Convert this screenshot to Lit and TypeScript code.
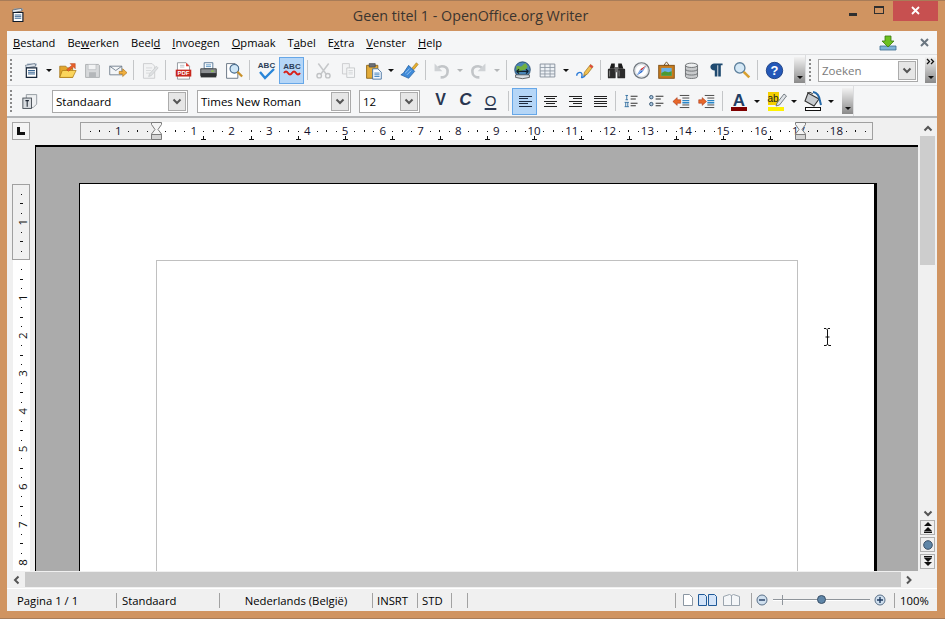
import { LitElement, html, css, svg, TemplateResult } from 'lit';
import { customElement } from 'lit/decorators.js';

const NAVY = '#1f3a5f';

const ic = (body: unknown, size = 19) =>
  html`<svg width=${size} height=${size} viewBox="0 0 22 22">${body}</svg>`;

// paragraph alignment icons are crisp 1px lines, so they get their own pixel grid
const al = (rows: number[][], color = '#222') =>
  html`<svg width="18" height="18" viewBox="0 0 18 18">${rows.map(
    ([x, y, w]) => svg`<rect x=${x} y=${y} width=${w} height="1" fill=${color}/>`
  )}</svg>`;

const ICONS: Record<string, TemplateResult> = {
  new: ic(svg`
    <path d="M6 3h11v2H6z" fill="#8fa3b8"/><path d="M4 5l11-2 1 3-11 2z" fill="#dfe6ee" stroke="#4a5a6c" stroke-width=".7"/>
    <path d="M5 8h12v11H5z" fill="#fff" stroke="#16263a" stroke-width="1.4"/>
    <path d="M7 11h8M7 13h8M7 15h8" stroke="#2c5c8c" stroke-width="1.1"/>`),
  open: ic(svg`
    <path d="M2 6h7l2 2h6v11H2z" fill="#e3a62b" stroke="#9a6a10" stroke-width=".8"/>
    <path d="M2 19l3-8h16l-4 8z" fill="#fbd55c" stroke="#a87512" stroke-width=".8"/>
    <path d="M10 10l6-5-2-2h6v6l-2-2-6 5z" fill="#e8602a" stroke="#a83a10" stroke-width=".5"/>`),
  save: ic(svg`
    <path d="M3 4h15l1 1v14H3z" fill="#d7d9db" stroke="#a8abae"/>
    <path d="M6 4h9v6H6z" fill="#f2f3f4" stroke="#b4b7ba" stroke-width=".7"/>
    <path d="M7 13h8v6H7z" fill="#b4b7ba"/>`),
  mail: ic(svg`
    <path d="M2 6h14v10H2z" fill="#f4f6f8" stroke="#6c7a88"/>
    <path d="M2 6l7 5 7-5" fill="none" stroke="#6c7a88"/>
    <path d="M13 12h4V9l5 4.500-5 4.500v-3h-4z" fill="#f0b040" stroke="#a86a10" stroke-width=".7"/>`),
  edit: ic(svg`
    <path d="M4 3h10l3 3v14H4z" fill="#f2f3f4" stroke="#c8cacc"/>
    <path d="M7 8h7M7 11h6M7 14h5" stroke="#d4d6d8"/>
    <path d="M11 15l8-9 2 2-8 9-3 1z" fill="#dfe1e3" stroke="#c2c4c6" stroke-width=".7"/>`),
  pdf: ic(svg`
    <path d="M4 2h10l4 4v15H4z" fill="#fff" stroke="#8a8f96"/>
    <path d="M14 2v4h4z" fill="#e03a30"/>
    <path d="M7 5h5M7 7h5" stroke="#b8bcc2"/>
    <rect x="2" y="10" width="18" height="8" fill="#c8281e"/>
    <text x="11" y="16.500" font-family="Liberation Sans" font-size="7" font-weight="700" fill="#fff" text-anchor="middle">PDF</text>`),
  print: ic(svg`
    <path d="M6 2h10v7H6z" fill="#fff" stroke="#4a6c8c"/>
    <path d="M8 4.500h6M8 6.500h6" stroke="#4a8cc0"/>
    <path d="M2 9h18v8H2z" fill="#8d9093" stroke="#3a3c3e"/>
    <path d="M2 14h18v5H2z" fill="#2f3133"/>
    <rect x="14" y="11" width="3" height="1.500" fill="#8fd040"/>`),
  preview: ic(svg`
    <path d="M3 3h10l3 3v14H3z" fill="#fff" stroke="#5a6878"/>
    <circle cx="12" cy="9" r="5" fill="#cfe6f6" stroke="#44698c" stroke-width="1.300"/>
    <path d="M15.500 12.500L21 18" stroke="#c8902a" stroke-width="2.600"/>`),
  abc: ic(svg`
    <text x="10.500" y="9" font-family="Liberation Sans" font-size="8" font-weight="700" fill="#2c3e58" text-anchor="middle">ABC</text>
    <path d="M4 13l5 6 9-9" fill="none" stroke="#2a86d8" stroke-width="2.400"/>`, 22),
  abcred: ic(svg`
    <text x="11" y="10" font-family="Liberation Sans" font-size="8" font-weight="700" fill="#2c3e58" text-anchor="middle">ABC</text>
    <path d="M3 14q2-3 4 0t4 0 4 0 4 0" fill="none" stroke="#d8201a" stroke-width="2"/>`, 22),
  cut: ic(svg`
    <path d="M5 3l9 12M17 3L8 15" stroke="#c6c8ca" stroke-width="1.800"/>
    <circle cx="6" cy="17" r="2.600" fill="none" stroke="#c0c2c4" stroke-width="1.600"/>
    <circle cx="16" cy="17" r="2.600" fill="none" stroke="#c0c2c4" stroke-width="1.600"/>`),
  copy: ic(svg`
    <path d="M4 3h8v12H4z" fill="#f2f3f4" stroke="#c8cacc"/>
    <path d="M9 8h9v11H9z" fill="#f6f7f8" stroke="#c4c6c8"/>
    <path d="M11 11h5M11 13h5M11 15h5" stroke="#d2d4d6"/>`),
  paste: ic(svg`
    <path d="M3 5h13v15H3z" fill="#e3ac3a" stroke="#8a6214"/>
    <path d="M6 3h7v4H6z" fill="#6c7178" stroke="#3a3e44" stroke-width=".7"/>
    <path d="M10 9h6l4 4v8H10z" fill="#f7fbff" stroke="#3c6c9c"/>
    <path d="M12 14h6M12 16h6M12 18h6" stroke="#2f78b8"/>`),
  brush: ic(svg`
    <path d="M14 8l5-6 2 2-5 6z" fill="#e8b030" stroke="#8a6410" stroke-width=".6"/>
    <path d="M10 5l7 7-7 8-9-4 3-2z" fill="#3f8ad8" stroke="#1f5a9c" stroke-width=".8"/>
    <path d="M6 14l5-5M8 16l5-5" stroke="#a8d0f4"/>`),
  undo: ic(svg`
    <path d="M6 9c4-5 13-3 12 4 0 4-4 6-8 6" fill="none" stroke="#c2c5c8" stroke-width="3"/>
    <path d="M3 3v9h9z" fill="#cfd2d5"/>`),
  redo: ic(svg`
    <path d="M16 9C12 4 3 6 4 13c0 4 4 6 8 6" fill="none" stroke="#c2c5c8" stroke-width="3"/>
    <path d="M19 3v9h-9z" fill="#cfd2d5"/>`),
  globe: ic(svg`
    <circle cx="11" cy="10" r="9" fill="#4a86b8" stroke="#22486c"/>
    <path d="M4 6c3-1 4 1 6 0s2-3 5-3l2 4-3 3-4 1-3 3-3-2z" fill="#72b040"/>
    <path d="M3 16h16v3q-8 3-16 0z" fill="#d8dde2" stroke="#333" stroke-width=".8"/>
    <path d="M4 12h14M4 12l3-2.500M4 12l3 2.500M18 12l-3-2.500M18 12l-3 2.500" stroke="#10202c" stroke-width="1.300" fill="none"/>`),
  table: ic(svg`
    <path d="M2.500 3.500h17v15h-17z" fill="#eef2f6" stroke="#7d8894"/>
    <path d="M2.500 7.500h17M2.500 11.500h17M2.500 15h17M8 3.500v15M14 3.500v15" stroke="#8d98a4"/>`),
  pencil: ic(svg`
    <path d="M2 17c0-4 5-5 6-2s-2 5 1 4 3-3 4-5" fill="none" stroke="#2a7ad8" stroke-width="1.600"/>
    <path d="M11 13L18 4l3 2.500-7 9-4 1.500z" fill="#f0c050" stroke="#8a6414" stroke-width=".7"/>
    <path d="M18 4l3 2.500-1.500 2-3-2.500z" fill="#e04a40"/>`),
  binoc: ic(svg`
    <path d="M3 9l2-6h4v6zM13 9V3h4l2 6z" fill="#1c1c1c"/>
    <rect x="1" y="9" width="9" height="11" rx="1" fill="#2c2c2c"/>
    <rect x="12" y="9" width="9" height="11" rx="1" fill="#2c2c2c"/>
    <rect x="9" y="7" width="4" height="6" fill="#6c6c6c"/>
    <path d="M3 11v7M14 11v7" stroke="#8c8c8c"/>`),
  compass: ic(svg`
    <circle cx="11" cy="11" r="9" fill="#dfe3e7" stroke="#6c737a" stroke-width="1.300"/>
    <circle cx="11" cy="11" r="6.500" fill="#fff"/>
    <path d="M17 5l-7.500 4.500L11 11z" fill="#d82820"/>
    <path d="M5 17l7.500-4.500L11 11z" fill="#2a6ad0"/>
    <path d="M17 5l-4.500 7.500L11 11zM5 17l4.500-7.500L11 11z" fill="#7ca4e0"/>`),
  picture: ic(svg`
    <path d="M11 1l-3 4h6z" fill="none" stroke="#6c4a20"/>
    <rect x="2" y="5" width="18" height="15" fill="#c87c1c" stroke="#7a4a10"/>
    <rect x="5" y="8" width="12" height="9" fill="#68b0e8"/>
    <path d="M5 14l4-2 4 1 4-1v5H5z" fill="#4c9a30"/>`),
  db: ic(svg`
    <path d="M4 5v13c0 3 14 3 14 0V5z" fill="#c8cacc" stroke="#66696c"/>
    <ellipse cx="11" cy="5" rx="7" ry="2.500" fill="#eceeef" stroke="#66696c"/>
    <path d="M4 9.500c0 3 14 3 14 0M4 14c0 3 14 3 14 0" fill="none" stroke="#66696c"/>`),
  pilcrow: ic(svg`
    <path d="M9 18V11C3 11 2 4 8 3h10v2h-2v13h-3V5h-1v13z" fill="#1f4a70"/>`),
  mag: ic(svg`
    <circle cx="9" cy="8" r="6" fill="#d4e8f6" stroke="#5c7f9c" stroke-width="1.500"/>
    <path d="M13.500 12.500L20 19" stroke="#d8a030" stroke-width="3"/>`),
  help: ic(svg`
    <circle cx="11" cy="11" r="9.500" fill="#2458b8" stroke="#183c80"/>
    <text x="11" y="16.500" font-family="Liberation Sans" font-size="15" font-weight="700" fill="#fff" text-anchor="middle">?</text>`),
  styles: ic(svg`
    <path d="M5 3h12v11l-4 4H5z" fill="#eef0f2" stroke="#8c939a"/>
    <rect x="1" y="7" width="10" height="12" fill="#d8dce0" stroke="#3c444c"/>
    <path d="M4 10h4M6 10v7" stroke="#1c2430" stroke-width="1.200"/>`),
  left: al([[3, 4, 13], [3, 6, 9], [3, 9, 13], [3, 11, 9], [3, 14, 13]], '#1c2a40'),
  center: al([[3, 4, 13], [5, 6, 9], [3, 9, 13], [5, 11, 9], [3, 14, 13]]),
  right: al([[3, 4, 13], [7, 6, 9], [3, 9, 13], [7, 11, 9], [3, 14, 13]]),
  just: al([[3, 4, 13], [3, 6, 13], [3, 9, 13], [3, 11, 13], [3, 14, 13]]),
  numbered: ic(svg`
    <path d="M4 4h3M5.500 4v5M4 9h3M3 12h5M3 17h5M4.300 12v5M6.700 12v5" stroke="#2a6a9c" fill="none"/>
    <path d="M10 5h8M10 8h6M10 13h8M10 16h6" stroke="#333" stroke-width="1.200"/>`),
  bullet: ic(svg`
    <circle cx="5" cy="6" r="2" fill="#a8c4dc" stroke="#2c4c6c"/><circle cx="5" cy="14" r="2" fill="#a8c4dc" stroke="#2c4c6c"/>
    <path d="M10 5h9M10 8h6M10 13h9M10 16h6" stroke="#333" stroke-width="1.200"/>`),
  outdent: ic(svg`
    <path d="M9 4h11M12 7h8M12 15h8M9 18h11" stroke="#333"/>
    <path d="M12 10h8M12 12.500h8" stroke="#2a86c8" stroke-width="1.600"/>
    <path d="M1 11l5-4.500V9h4v4H6v2.500z" fill="#e8682a" stroke="#a02c10" stroke-width=".6"/>`),
  indent: ic(svg`
    <path d="M9 4h11M12 7h8M12 15h8M9 18h11" stroke="#333"/>
    <path d="M12 10h8M12 12.500h8" stroke="#2a86c8" stroke-width="1.600"/>
    <path d="M11 11L6 6.500V9H2v4h4v2.500z" fill="#e8682a" stroke="#a02c10" stroke-width=".6"/>`),
  font: ic(svg`
    <text x="11" y="16" font-family="Liberation Sans" font-size="17" font-weight="700" fill="#1f3f66" text-anchor="middle">A</text>
    <rect x="3" y="17" width="16" height="4" fill="#7e0000"/>`, 22),
  hilite: ic(svg`
    <rect x="3" y="2" width="11" height="13" fill="#f4d000"/>
    <text x="8" y="12" font-family="Liberation Sans" font-size="10" fill="#222" text-anchor="middle">ab</text>
    <path d="M12 13L19 4l2.500 2-7 9-3.500 1z" fill="#dfe3e7" stroke="#5c646c" stroke-width=".8"/>
    <rect x="3" y="17" width="16" height="4" fill="#fff200"/>`, 22),
  bucket: ic(svg`
    <path d="M6 3l11 6-5 7-9-5z" fill="#c8ccd0" stroke="#333" stroke-width="1.100"/>
    <path d="M11 2q6 1 7 9l1 4" fill="none" stroke="#2468a8" stroke-width="2"/>
    <path d="M5 3q3-2 6 1" fill="none" stroke="#444"/>
    <rect x="3.500" y="17.500" width="15" height="3" fill="#fff" stroke="#111"/>`, 22),
};

// toolbar rows: icon name (! = pressed), a/A = narrow/wide arrow, d = dimmed arrow,
// | = separator (|8, |9 are wider ones), g1 = one pixel of extra room
const ROW1 = ['new', 'a', 'g1', 'open', 'save', 'mail', '|', 'edit', '|9', 'pdf', 'print', 'preview', '|8',
  'abc', 'abcred!', '|', 'cut', 'copy', 'paste', 'a', 'g1', 'brush', '|', 'undo', 'd', 'redo', 'd', '|',
  'globe', 'table', 'A', 'pencil', '|', 'binoc', 'compass', 'picture', 'db', 'pilcrow', 'mag', '|8', 'help'];

const ROW2 = ['|', 'left!', 'center', 'right', 'just', '|', 'numbered', 'bullet', 'outdent', 'indent', '|',
  'font', 'A', 'hilite', 'A', 'bucket', 'A'];

const MENU: [string, string, string][] = [
  ['', 'B', 'estand'], ['Be', 'w', 'erken'], ['Beel', 'd', ''], ['', 'I', 'nvoegen'], ['', 'O', 'pmaak'],
  ['T', 'a', 'bel'], ['E', 'x', 'tra'], ['', 'V', 'enster'], ['', 'H', 'elp'],
];

@customElement('app-root')
export class AppRoot extends LitElement {
  static styles = css`
    :host {
      display: block;
      width: 945px;
      height: 619px;
      overflow: hidden;
      background: #d09461;
      font-family: "Open Sans", "Liberation Sans", sans-serif;
      font-size: 11.5px;
      color: #000;
      box-sizing: border-box;
      border-top: 1px solid #a87c58;
      border-bottom: 1px solid #a87c58;
    }
    svg { display: block; }
    .titlebar { height: 30px; display: flex; align-items: flex-start; }
    .appicon { margin: 5px 0 0 9px; width: 18px; }
    .title { flex: 1; text-align: center; font-size: 14.3px; line-height: 30px; color: #3b3530; margin-left: 75px; white-space: nowrap; }
    .winbtns { display: flex; height: 20px; margin-right: 7px; }
    .winbtn { display: flex; align-items: center; justify-content: center; width: 27px; }
    .winbtn.close { width: 45px; background: #c75050; }

    .client {
      margin: 0 8px 0 7px; height: 580px; background: #f5f6f7;
      display: flex; flex-direction: column;
    }
    .menu {
      height: 23px; border-bottom: 1px solid #dcdddf; display: flex; align-items: center;
      gap: 12px; padding-left: 6px; font-size: 11.1px; flex: none;
    }
    .menu u { text-underline-offset: 1px; }
    .menuend { margin-left: auto; display: flex; align-items: center; gap: 22px; padding-right: 7px; }

    .tb { display: flex; align-items: center; flex: none; }
    .tb1 { height: 30px; border-bottom: 1px solid #dcdddf; }
    .tb2 { height: 30px; border-bottom: 2px solid #b4b6b8; }
    .grip { width: 2px; height: 22px; margin: 0 5px 0 3px; border-left: 2px dotted #8a8a8a; box-sizing: border-box; flex: none; }
    .grip.lead { margin-right: 7px; }
    .btn { width: 25px; height: 27px; display: flex; align-items: center; justify-content: center; flex: none; box-sizing: border-box; }
    .btn.on { background: #b5d6f7; border: 1px solid #66a7e8; }
    .btn.txt { font-family: "Liberation Sans", sans-serif; font-size: 16px; color: #2a3650; padding-bottom: 2px; }
    .btn .b { font-weight: 700; }
    .btn .i { font-style: italic; font-weight: 700; font-size: 17px; }
    .btn .u { text-decoration: underline; text-underline-offset: 2px; text-decoration-thickness: 2px; font-size: 15px; }
    .arrow { width: 10px; height: 27px; display: flex; align-items: center; justify-content: center; flex: none; }
    .arrow::after { content: ""; border: 3px solid transparent; border-top: 3px solid #111; border-bottom: 0; }
    .arrow.wide { width: 12px; }
    .arrow.dim::after { border-top-color: #b4b6b8; }
    .g1 { width: 1px; flex: none; }
    .g2 { width: 2px; flex: none; }
    .g5 { width: 5px; flex: none; }
    .g7 { width: 7px; flex: none; }
    .sep { width: 7px; height: 20px; flex: none; position: relative; }
    .sep::after { content: ""; position: absolute; left: 3px; top: 0; bottom: 0; width: 1px; background: #c4c6c8; }
    .sep.w8 { width: 8px; }
    .sep.w9 { width: 9px; }
    .over { width: 11px; height: 26px; flex: none; background: linear-gradient(#f2f2f2, #8a8a8a); position: relative; }
    .over::after { content: ""; position: absolute; left: 3px; bottom: 4px; border: 3px solid transparent; border-top: 3px solid #111; border-bottom: 0; }
    .over svg { position: absolute; top: 1px; left: 1px; }
    .vline { width: 1px; align-self: stretch; background: #dcdddf; flex: none; }

    .combo {
      height: 23px; box-sizing: border-box; border: 1px solid #a9a9a9; background: #fff;
      display: flex; align-items: center; padding-left: 3px; flex: none; white-space: nowrap;
    }
    .combo span { flex: 1; }
    .combo i { width: 16px; height: 17px; margin-right: 1px; border: 1px solid #acacac; background: #e6e6e6; display: flex; align-items: center; justify-content: center; flex: none; }
    .combo.dim span { color: #7a7a7a; }
    .w136 { width: 136px; margin-left: 8px; }
    .w154 { width: 154px; margin-left: 9px; }
    .w61 { width: 61px; margin-left: 8px; margin-right: 7px; }
    .w100 { width: 100px; margin-left: 2px; }

    .work { display: flex; height: 453px; flex: none; }
    .main { flex: 1; min-width: 0; display: flex; flex-direction: column; }
    .rulerrow { height: 27px; background: #f0f0f0; display: flex; align-items: flex-start; padding-top: 4px; box-sizing: border-box; flex: none; }
    .corner { width: 18px; height: 18px; box-sizing: border-box; margin-left: 5px; margin-right: 50px; border: 1px solid #a6a6a6; display: flex; align-items: center; justify-content: center; background: #f4f4f4; }
    .body { height: 426px; display: flex; flex: none; }
    .vruler { width: 28px; background: #f0f0f0; flex: none; padding-left: 5px; box-sizing: border-box; }
    .doc {
      flex: 1; background: #ababab; overflow: hidden; position: relative; box-sizing: border-box;
      border-top: 2px solid #000; border-left: 1px solid #000; padding: 36px 41px 0 43px;
    }
    .page { height: 600px; background: #fff; box-sizing: border-box; border-top: 1px solid #000; border-left: 1px solid #000; border-right: 3px solid #000; padding: 76px 76px 0; }
    .margin { height: 500px; border: 1px solid #c0c0c0; box-sizing: border-box; }
    .cursor { position: absolute; left: 787px; top: 181px; }
    .vscroll { width: 19px; background: #f0f0f0; flex: none; display: flex; flex-direction: column; align-items: center; box-sizing: border-box; }
    .vscroll .up { height: 18px; padding-top: 7px; box-sizing: border-box; flex: none; }
    .thumbv { width: 15px; height: 129px; background: #cdcdcd; flex: none; }
    .spring { flex: 1; }
    .vscroll .down { height: 14px; flex: none; display: flex; align-items: center; }
    .nav { width: 15px; height: 15px; margin: 0 0 2px; box-sizing: border-box; border: 1px solid #b0b0b0; display: flex; align-items: center; justify-content: center; background: #f0f0f0; flex: none; }
    .hscroll { height: 18px; background: #f0f0f0; display: flex; align-items: center; flex: none; padding-left: 6px; box-sizing: border-box; border-bottom: 1px solid #fff; }
    .thumbh { width: 876px; height: 15px; background: #c9c9c9; margin: 0 4px; }
    .status { height: 22px; background: #f0f0f0; display: flex; align-items: center; flex: none; font-size: 11.3px; }
    .cell { height: 15px; border-right: 1px solid #a2a2a2; flex: none; box-sizing: border-box; display: flex; align-items: center; white-space: nowrap; padding-left: 5px; }
    .cell.first { width: 110px; padding-left: 10px; }
    .c103 { width: 103px; }
    .c153 { width: 153px; justify-content: center; padding-left: 0; }
    .c45 { width: 45px; padding-left: 4px; }
    .c34 { width: 34px; padding-left: 4px; }
    .c16 { width: 16px; }
    .c208 { width: 208px; }
    .c76 { width: 76px; padding-left: 7px; }
    .c143 { width: 143px; padding-left: 4px; }
    .pct { padding-left: 5px; }
    .page2 { margin-left: 5px; }
    .page3 { margin-left: 6px; }
    .track { width: 97px; height: 2px; background: linear-gradient(#8f959b 50%, #fff 50%); position: relative; margin: 0 4px 0 5px; }
    .track .t1 { position: absolute; left: 9px; top: -4px; width: 1px; height: 10px; background: #8f959b; }
    .track .knob { position: absolute; left: 44px; top: -4px; width: 7px; height: 7px; border-radius: 50%; background: #5f86a8; border: 1px solid #3a5068; }
  `;

  private renderItems(items: string[]) {
    return items.map((it) => {
      if (it === 'a') return html`<span class="arrow"></span>`;
      if (it === 'A') return html`<span class="arrow wide"></span>`;
      if (it === 'd') return html`<span class="arrow wide dim"></span>`;
      if (it === 'g1') return html`<span class="g1"></span>`;
      if (it === '|') return html`<span class="sep"></span>`;
      if (it === '|8') return html`<span class="sep w8"></span>`;
      if (it === '|9') return html`<span class="sep w9"></span>`;
      const on = it.endsWith('!');
      const name = on ? it.slice(0, -1) : it;
      return html`<span class="btn ${on ? 'on' : ''}">${ICONS[name]}</span>`;
    });
  }

  private chevDown(color = '#555') {
    return html`<svg width="10" height="7" viewBox="0 0 10 7"><path d="M1.500 1.500L5 5l3.500-3.500" fill="none" stroke=${color} stroke-width="2"/></svg>`;
  }

  private combo(text: string, cls: string) {
    return html`<div class="combo ${cls}"><span>${text}</span><i>${this.chevDown()}</i></div>`;
  }

  private hRuler() {
    const x0 = 76; // position of the zero mark inside the strip
    const cm = 37.8;
    const parts: unknown[] = [];
    for (let n = -2; n <= 19; n++) {
      const x = x0 + n * cm;
      for (const f of [0.25, 0.5, 0.75]) {
        const tx = Math.round(x + f * cm);
        if (tx < 5 || tx > 788) continue;
        parts.push(svg`<rect x=${tx} y=${f === 0.5 ? 8 : 9} width="1" height=${f === 0.5 ? 2 : 1} fill="#111"/>`);
      }
      if (n !== 0 && n >= -1 && n <= 18) {
        parts.push(svg`<text x=${x} y="13" font-size="11.5" font-family="Open Sans" text-anchor="middle" fill="#14102c">${Math.abs(n)}</text>`);
      }
    }
    for (let i = 1; i <= 13; i++) {
      const x = Math.round(x0 + i * 47.25);
      parts.push(svg`<path d="M${x + 0.5} 14v3M${x - 2} 17.500h5" stroke="#111" fill="none"/>`);
    }
    const handle = (x: number) => svg`
      <path d="M${x - 5} .5h10v2l-3.500 5 3.500 4.500v5h-10v-5L${x - 1.500} 7.500l-3.500-5z" fill="#f4f4f4" stroke="#7c7c7c"/>
      <path d="M${x - 5} 12.500h10v5h-10z" fill="#d4d4d4" stroke="#7c7c7c"/>`;
    return html`<svg width="793" height="18" viewBox="0 0 793 18">
      <rect width="793" height="18" fill="#fff"/>
      <rect x=".5" y=".5" width="76" height="17" fill="#f0f0f0" stroke="#a0a0a0"/>
      <rect x="720.500" y=".5" width="72" height="17" fill="#f0f0f0" stroke="#a0a0a0"/>
      ${parts}${handle(76.5)}${handle(720.5)}
    </svg>`;
  }

  private vRuler() {
    const y0 = 115; // zero mark from the top of the column
    const cm = 37.8;
    const parts: unknown[] = [];
    for (let n = -2; n <= 8; n++) {
      const y = y0 + n * cm;
      for (const f of [0.25, 0.5, 0.75]) {
        const ty = Math.round(y + f * cm);
        if (ty < 42 || ty > 425) continue;
        parts.push(svg`<rect x=${f === 0.5 ? 8 : 9} y=${ty} width=${f === 0.5 ? 3 : 1} height="1" fill="#111"/>`);
      }
      if (n !== 0 && n >= -1 && n <= 8) {
        parts.push(svg`<text transform="translate(15 ${y}) rotate(-90)" font-size="11.5" font-family="Open Sans" text-anchor="middle" fill="#111">${Math.abs(n)}</text>`);
      }
    }
    return html`<svg width="18" height="426" viewBox="0 0 18 426">
      <rect x="1" y="115" width="17" height="311" fill="#fff"/>
      <rect x=".5" y="39.500" width="17" height="75" fill="#f0f0f0" stroke="#a0a0a0"/>
      ${parts}
    </svg>`;
  }

  render() {
    return html`
      <div class="titlebar">
        <div class="appicon">${ic(svg`
          <path d="M6 3h11v2H6z" fill="#8fa3b8"/><path d="M4 5l11-2 1 3-11 2z" fill="#e8eef4" stroke="#33414f" stroke-width=".7"/>
          <path d="M5 8h12v11H5z" fill="#fff" stroke="#0e1a2a" stroke-width="1.400"/>
          <path d="M7 11h8M7 13h8M7 15h8" stroke="#2c5c8c" stroke-width="1.100"/>`, 18)}</div>
        <div class="title">Geen titel 1 - OpenOffice.org Writer</div>
        <div class="winbtns">
          <div class="winbtn"><svg width="10" height="10" viewBox="0 0 10 10"><rect x="1" y="7" width="8" height="3" fill="#2f2f2f"/></svg></div>
          <div class="winbtn"><svg width="11" height="10" viewBox="0 0 11 10"><rect x=".5" y=".5" width="9" height="7" fill="none" stroke="#2f2f2f"/><rect width="10" height="2" fill="#2f2f2f"/></svg></div>
          <div class="winbtn close"><svg width="10" height="10" viewBox="0 0 10 10"><path d="M1 1l7 7M8 1L1 8" stroke="#fff" stroke-width="1.800"/></svg></div>
        </div>
      </div>
      <div class="client">
        <div class="menu">
          ${MENU.map(([a, u, b]) => html`<span>${a}<u>${u}</u>${b}</span>`)}
          <div class="menuend">
            <svg width="18" height="16" viewBox="0 0 18 16"><path d="M1 11h16v4H1z" fill="#7fb3d8" stroke="#3a6c90" stroke-width=".8"/><path d="M6 1h6v5h3l-6 6-6-6h3z" fill="#6cc020" stroke="#3a7a10" stroke-width=".8"/></svg>
            <svg width="11" height="11" viewBox="0 0 11 11"><path d="M2 2l7 7M9 2L2 9" stroke="#6a7680" stroke-width="2"/></svg>
          </div>
        </div>

        <div class="tb tb1">
          <span class="grip lead"></span>
          ${this.renderItems(ROW1)}
          <span class="g7"></span>
          <span class="over"></span>
          <span class="vline"></span>
          <span class="grip"></span>
          ${this.combo('Zoeken', 'dim w100')}
          <span class="g7"></span>
          <span class="over"><svg width="9" height="7" viewBox="0 0 9 7"><path d="M1 1l2.500 2.500L1 6M5 1l2.500 2.500L5 6" fill="none" stroke="#111" stroke-width="1.300"/></svg></span>
        </div>

        <div class="tb tb2">
          <span class="grip lead"></span>
          <span class="btn">${ICONS.styles}</span>
          ${this.combo('Standaard', 'w136')}
          ${this.combo('Times New Roman', 'w154')}
          ${this.combo('12', 'w61')}
          <span class="g1"></span>
          <span class="btn txt"><span class="b">V</span></span>
          <span class="btn txt"><span class="i">C</span></span>
          <span class="btn txt"><span class="u">O</span></span>
          <span class="g2"></span>
          ${this.renderItems(ROW2)}
          <span class="g5"></span>
          <span class="over"></span>
          <span class="vline"></span>
        </div>

        <div class="work">
          <div class="main">
            <div class="rulerrow">
              <div class="corner"><svg width="10" height="8" viewBox="0 0 10 8"><path d="M1 0h3v5h5v3H1z" fill="#111"/></svg></div>
              ${this.hRuler()}
            </div>
            <div class="body">
              <div class="vruler">${this.vRuler()}</div>
              <div class="doc">
                <div class="page"><div class="margin"></div></div>
                <svg class="cursor" width="9" height="18" viewBox="0 0 9 18"><path d="M1 .5h2l1 1 1-1h2M4.500 1.500v15M1 17.500h2l1.500-1 1.500 1h2M2.500 9h4" fill="none" stroke="#111"/></svg>
              </div>
            </div>
          </div>
          <div class="vscroll">
            <div class="up"><svg width="10" height="7" viewBox="0 0 10 7"><path d="M1.500 5.500L5 2l3.500 3.500" fill="none" stroke="#555" stroke-width="2"/></svg></div>
            <div class="thumbv"></div>
            <div class="spring"></div>
            <div class="down">${this.chevDown()}</div>
            <div class="nav"><svg width="10" height="11" viewBox="0 0 10 11"><path d="M5 0l4 4H1zM5 5l4 4H1z" fill="#111"/><rect x="1" y="9.500" width="8" height="1.500" fill="#111"/></svg></div>
            <div class="nav"><svg width="10" height="10" viewBox="0 0 10 10"><circle cx="5" cy="5" r="4.300" fill="#5f86a8" stroke="#3a5068"/></svg></div>
            <div class="nav"><svg width="10" height="11" viewBox="0 0 10 11"><rect x="1" y="0" width="8" height="1.500" fill="#111"/><path d="M1 2h8L5 6zM1 6h8l-4 4z" fill="#111"/></svg></div>
          </div>
        </div>

        <div class="hscroll">
          <svg width="8" height="10" viewBox="0 0 8 10"><path d="M5.500 1.500L2 5l3.500 3.500" fill="none" stroke="#555" stroke-width="2"/></svg>
          <div class="thumbh"></div>
          <svg width="8" height="10" viewBox="0 0 8 10"><path d="M2 1.500L5.500 5 2 8.500" fill="none" stroke="#555" stroke-width="2"/></svg>
        </div>

        <div class="status">
          <div class="cell first">Pagina 1 / 1</div>
          <div class="cell c103">Standaard</div>
          <div class="cell c153">Nederlands (België)</div>
          <div class="cell c45">INSRT</div>
          <div class="cell c34">STD</div>
          <div class="cell c16"></div>
          <div class="cell c208"></div>
          <div class="cell c76">
            <svg width="10" height="12" viewBox="0 0 10 12"><path d="M.5.500h6l3 3v8h-9z" fill="#fff" stroke="#8a96a2"/></svg>
            <svg class="page2" width="19" height="12" viewBox="0 0 19 12"><path d="M.5.500h6l2 2v9h-8zM10.500.5h6l2 2v9h-8z" fill="#d4e4f8" stroke="#205a98"/></svg>
            <svg class="page3" width="17" height="12" viewBox="0 0 17 12"><path d="M.5 2.500l6-2 2 1v10h-8zM8.500 1.500l2-1 6 2v9h-8z" fill="#f4f6f8" stroke="#9aa4ae"/></svg>
          </div>
          <div class="cell c143">
            <svg width="12" height="12" viewBox="0 0 12 12"><circle cx="6" cy="6" r="5" fill="#cfdfee" stroke="#5a7088"/><path d="M3 6h6" stroke=${NAVY} stroke-width="1.400"/></svg>
            <div class="track"><span class="t1"></span><span class="knob"></span></div>
            <svg width="12" height="12" viewBox="0 0 12 12"><circle cx="6" cy="6" r="5" fill="#cfdfee" stroke="#5a7088"/><path d="M3 6h6M6 3v6" stroke=${NAVY} stroke-width="1.400"/></svg>
          </div>
          <div class="pct">100%</div>
        </div>
      </div>
    `;
  }
}
